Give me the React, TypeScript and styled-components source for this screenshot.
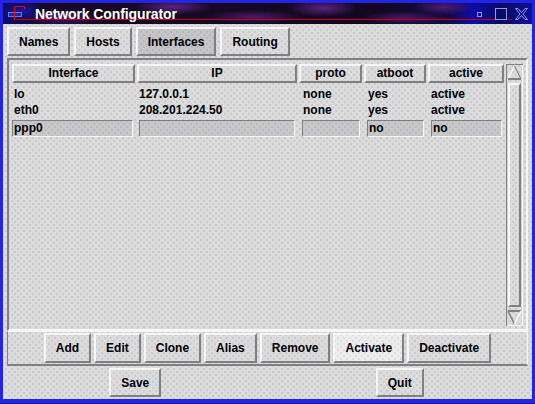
import styled, { createGlobalStyle } from "styled-components";

const GlobalStyle = createGlobalStyle`
  html, body {
    margin: 0;
    padding: 0;
    background: #2424e4;
  }
  body {
    font-family: "Liberation Sans", Arial, Helvetica, sans-serif;
  }
`;

// Motif-like stippled face used by every widget
const stipple = (base: string, dot: string) => `
  background-color: ${base};
  background-image:
    radial-gradient(circle, ${dot} 0.6px, transparent 1px),
    radial-gradient(circle, ${dot} 0.6px, transparent 1px);
  background-size: 6px 6px, 6px 6px;
  background-position: 0 0, 3px 3px;
`;

const LIGHT = "#f6f6f6";
const DARK = "#808082";
const COLUMNS = "123px 160px 63px 62px 1fr";

const columns = ["Interface", "IP", "proto", "atboot", "active"];

const interfaces = [
  { name: "lo", ip: "127.0.0.1", proto: "none", atboot: "yes", active: "active" },
  { name: "eth0", ip: "208.201.224.50", proto: "none", atboot: "yes", active: "active" },
];

const editRow = ["ppp0", "", "", "no", "no"];

const actions = ["Add", "Edit", "Clone", "Alias", "Remove", "Activate", "Deactivate"];

const tabs = ["Names", "Hosts", "Interfaces", "Routing"];

const App = () => {
  return (
    <>
      <GlobalStyle />
      <Window>
        <TitleBar>
          <WindowMenuIcon width="30" height="21" viewBox="0 0 30 21">
            <rect x="5.5" y="9.5" width="13" height="4" fill="#1c2aa8" stroke="#6474ec" />
            <path d="M11.5 3.5 H21.5 V6" stroke="#d01010" fill="none" />
            <path d="M11.5 3.5 V17" stroke="#d01010" fill="none" />
          </WindowMenuIcon>
          <TitleText>Network Configurator</TitleText>
          <WindowControls width="60" height="21" viewBox="0 0 60 21">
            <rect x="5.5" y="9.5" width="4" height="4" fill="none" stroke="#8c9ce4" />
            <rect x="23.5" y="5.5" width="11" height="11" fill="none" stroke="#8c9ce4" />
            <path
              d="M43.5 5.5 L46 5.5 L49.5 9.5 L53 5.5 L55.5 5.5 L51 11 L55.5 16.5 L53 16.5 L49.5 12.5 L46 16.5 L43.5 16.5 L48 11 Z"
              fill="none"
              stroke="#8c9ce4"
            />
          </WindowControls>
        </TitleBar>

        <Client>
          <TabRow>
            {tabs.map((t) => (
              <Button key={t} $tone={t === "Interfaces" ? "pressed" : "normal"} $height={29}>
                {t}
              </Button>
            ))}
          </TabRow>

          <MainPanel>
            <ListArea>
              <Table>
                <GridRow>
                  {columns.map((c) => (
                    <HeaderCell key={c}>{c}</HeaderCell>
                  ))}
                </GridRow>
                <Rows>
                  {interfaces.map((r) => (
                    <GridRow key={r.name}>
                      <Cell>{r.name}</Cell>
                      <Cell>{r.ip}</Cell>
                      <Cell $indent={4}>{r.proto}</Cell>
                      <Cell $indent={4}>{r.atboot}</Cell>
                      <Cell $indent={3}>{r.active}</Cell>
                    </GridRow>
                  ))}
                  <EditRow>
                    {editRow.map((v, i) => (
                      <FieldCell key={i} $inset={i >= 2 ? 3 : i === 1 ? 2 : 0}>
                        <Field>{v}</Field>
                      </FieldCell>
                    ))}
                  </EditRow>
                </Rows>
              </Table>

              <Scrollbar>
                <ArrowButton width="17" height="18" viewBox="0 0 17 18">
                  <path d="M2 15 L8.5 2 L15 15" fill="none" stroke={LIGHT} strokeWidth="1.5" />
                  <path d="M2 15 H15" stroke={DARK} strokeWidth="2" />
                  <path d="M8.5 2 L15 15" stroke={DARK} strokeWidth="1.2" />
                </ArrowButton>
                <Trough>
                  <Thumb />
                </Trough>
                <ArrowButton width="17" height="18" viewBox="0 0 17 18">
                  <path d="M2 3 H15" stroke={DARK} strokeWidth="2" />
                  <path d="M2 3 L8.5 16" stroke={DARK} strokeWidth="1.5" />
                  <path d="M8.5 16 L15 3" stroke={LIGHT} strokeWidth="1.5" />
                </ArrowButton>
              </Scrollbar>
            </ListArea>

            <ButtonBar>
              {actions.map((a) => (
                <Button key={a} $tone={a === "Activate" ? "hot" : "normal"} $height={30}>
                  {a}
                </Button>
              ))}
            </ButtonBar>
          </MainPanel>

          <BottomRow>
            <BottomCell>
              <Button $tone="normal" $height={29}>Save</Button>
            </BottomCell>
            <BottomCell>
              <Button $tone="normal" $height={29}>Quit</Button>
            </BottomCell>
          </BottomRow>
        </Client>
      </Window>
    </>
  );
};

export default App;

const Window = styled.div`
  width: 535px;
  height: 404px;
  box-sizing: border-box;
  display: flex;
  flex-direction: column;
  padding: 3px 3px 4px;
  background: #2424e4;
  border-bottom: 1px solid #1010a0;
`;

const TitleBar = styled.div`
  display: flex;
  align-items: center;
  height: 21px;
  flex-shrink: 0;
  background:
    linear-gradient(#c00010, #c00010) 11px 16px / 498px 1px no-repeat,
    radial-gradient(ellipse 40px 8px at 170px 4px, #5c2480, transparent),
    radial-gradient(ellipse 50px 7px at 250px 14px, #4a1a6c, transparent),
    radial-gradient(ellipse 36px 9px at 320px 5px, #5a2280, transparent),
    radial-gradient(ellipse 44px 7px at 400px 15px, #48186a, transparent),
    radial-gradient(ellipse 30px 8px at 440px 4px, #4e1c74, transparent),
    radial-gradient(ellipse 40px 10px at 60px 15px, #3a1470, transparent),
    radial-gradient(ellipse 20px 10px at 20px 8px, #1818a0, transparent),
    linear-gradient(
      90deg,
      #0c0c70 0%,
      #140822 8%,
      #160822 40%,
      #120620 70%,
      #140a40 84%,
      #0c0ca8 89%,
      #0a0a60 94%,
      #101098 100%
    );
`;

const WindowMenuIcon = styled.svg`
  flex-shrink: 0;
`;

const TitleText = styled.span`
  margin-left: 2px;
  color: #ffffff;
  font-weight: bold;
  font-size: 14px;
  letter-spacing: -0.1px;
`;

const WindowControls = styled.svg`
  margin-left: auto;
  flex-shrink: 0;
`;

const Client = styled.div`
  flex: 1;
  display: flex;
  flex-direction: column;
  padding: 3px 4px 0;
  ${stipple("#dcdcdd", "#c2c2c8")}
`;

const TabRow = styled.div`
  display: flex;
  gap: 4px;
`;

type Tone = "normal" | "pressed" | "hot";

const faces: Record<Tone, string> = {
  normal: stipple("#dcdcdd", "#c4c4ca"),
  pressed: stipple("#c6c6c8", "#b0b0b6"),
  hot: stipple("#ededed", "#d8d8dc"),
};

const Button = styled.button<{ $tone: Tone; $height: number }>`
  box-sizing: border-box;
  height: ${(p) => p.$height}px;
  padding: 0 10px;
  border: 2px solid;
  border-color: ${LIGHT} ${DARK} ${DARK} ${LIGHT};
  ${(p) => faces[p.$tone]}
  color: #000;
  font-family: "Liberation Sans", Arial, sans-serif;
  font-weight: bold;
  font-size: 12px;
  cursor: pointer;
`;

const MainPanel = styled.div`
  display: flex;
  flex-direction: column;
  margin-top: 2px;
  height: 308px;
  flex-shrink: 0;
`;

const ListArea = styled.div`
  box-sizing: border-box;
  height: 273px;
  display: flex;
  gap: 2px;
  padding: 4px 3px 3px;
  border: 2px solid;
  border-color: ${DARK} ${LIGHT} ${LIGHT} ${DARK};
`;

const Table = styled.div`
  flex: 1;
  display: flex;
  flex-direction: column;
`;

const GridRow = styled.div`
  display: grid;
  grid-template-columns: ${COLUMNS};
  column-gap: 2px;
`;

const HeaderCell = styled.div`
  box-sizing: border-box;
  height: 19px;
  line-height: 15px;
  text-align: center;
  border: 2px solid;
  border-color: ${LIGHT} ${DARK} ${DARK} ${LIGHT};
  font-weight: bold;
  font-size: 12px;
  color: #000;
`;

const Rows = styled.div`
  display: flex;
  flex-direction: column;
  padding-top: 3px;
`;

const Cell = styled.div<{ $indent?: number }>`
  height: 16px;
  line-height: 16px;
  padding-left: ${(p) => p.$indent ?? 2}px;
  font-weight: bold;
  font-size: 12px;
  color: #000;
  white-space: nowrap;
`;

const EditRow = styled(GridRow)`
  margin-top: 2px;
`;

const FieldCell = styled.div<{ $inset: number }>`
  padding-left: ${(p) => p.$inset}px;
  padding-right: 2px;
`;

const Field = styled.div`
  box-sizing: border-box;
  height: 17px;
  line-height: 15px;
  padding-left: 1px;
  border: 1px solid;
  border-color: ${DARK} ${LIGHT} ${LIGHT} ${DARK};
  ${stipple("#c8c8ca", "#b4b4ba")}
  font-weight: bold;
  font-size: 12px;
  color: #000;
`;

const Scrollbar = styled.div`
  width: 17px;
  display: flex;
  flex-direction: column;
  box-shadow: inset 1px 1px 0 ${DARK}, inset -1px -1px 0 ${LIGHT};
`;

const ArrowButton = styled.svg`
  display: block;
  flex-shrink: 0;
`;

const Trough = styled.div`
  flex: 1;
  display: flex;
  padding: 1px 0;
`;

const Thumb = styled.div`
  flex: 1;
  margin: 0 2px;
  border: 2px solid;
  border-color: ${LIGHT} ${DARK} ${DARK} ${LIGHT};
`;

const ButtonBar = styled.div`
  box-sizing: border-box;
  height: 35px;
  display: flex;
  align-items: center;
  justify-content: center;
  gap: 3px;
  border-top: 1px solid ${LIGHT};
  border-bottom: 2px solid ${DARK};
  border-left: 1px solid ${DARK};
  border-right: 1px solid ${LIGHT};
`;

const BottomRow = styled.div`
  flex: 1;
  display: grid;
  grid-template-columns: 1fr 1fr;
  margin: 0 -4px;
`;

const BottomCell = styled.div`
  display: flex;
  align-items: center;
  justify-content: center;
`;
